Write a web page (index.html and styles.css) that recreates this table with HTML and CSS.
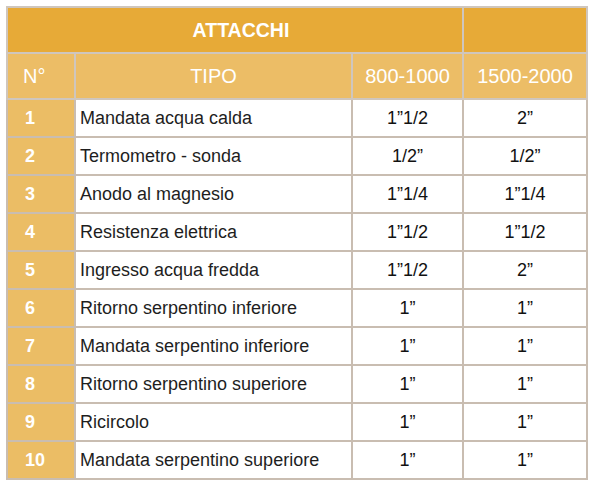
FILE: index.html
```html
<!DOCTYPE html>
<html lang="it">
<head>
<meta charset="utf-8">
<title>Attacchi</title>
<link rel="stylesheet" href="styles.css">
</head>
<body>
<table class="tbl">
  <colgroup>
    <col class="c-num"><col class="c-tipo"><col class="c-a"><col class="c-b">
  </colgroup>
  <thead>
    <tr class="title-row">
      <th colspan="3" class="title">ATTACCHI</th>
      <th class="title-empty"></th>
    </tr>
    <tr class="head-row">
      <th class="h-num">N°</th>
      <th>TIPO</th>
      <th>800-1000</th>
      <th>1500-2000</th>
    </tr>
  </thead>
  <tbody>
    <tr><td class="num">1</td><td class="tipo">Mandata acqua calda</td><td class="val">1”1/2</td><td class="val">2”</td></tr>
    <tr><td class="num">2</td><td class="tipo">Termometro - sonda</td><td class="val">1/2”</td><td class="val">1/2”</td></tr>
    <tr><td class="num">3</td><td class="tipo">Anodo al magnesio</td><td class="val">1”1/4</td><td class="val">1”1/4</td></tr>
    <tr><td class="num">4</td><td class="tipo">Resistenza elettrica</td><td class="val">1”1/2</td><td class="val">1”1/2</td></tr>
    <tr><td class="num">5</td><td class="tipo">Ingresso acqua fredda</td><td class="val">1”1/2</td><td class="val">2”</td></tr>
    <tr><td class="num">6</td><td class="tipo">Ritorno serpentino inferiore</td><td class="val">1”</td><td class="val">1”</td></tr>
    <tr><td class="num">7</td><td class="tipo">Mandata serpentino inferiore</td><td class="val">1”</td><td class="val">1”</td></tr>
    <tr><td class="num">8</td><td class="tipo">Ritorno serpentino superiore</td><td class="val">1”</td><td class="val">1”</td></tr>
    <tr><td class="num">9</td><td class="tipo">Ricircolo</td><td class="val">1”</td><td class="val">1”</td></tr>
    <tr><td class="num">10</td><td class="tipo">Mandata serpentino superiore</td><td class="val">1”</td><td class="val">1”</td></tr>
  </tbody>
</table>
</body>
</html>
```
FILE: styles.css
```css
html, body {
  margin: 0;
  padding: 0;
  background: #ffffff;
}
body {
  padding: 6px 0 0 6px;
  font-family: "Liberation Sans", Arial, Helvetica, sans-serif;
}
.tbl {
  border-collapse: collapse;
  table-layout: fixed;
  width: 580px;
}
.c-num { width: 68px; }
.c-tipo { width: 277px; }
.c-a { width: 111px; }
.c-b { width: 124px; }

.tbl th, .tbl td {
  border: 2px solid #c9bdb1;
  padding: 0;
}
.title-row th {
  background: #e7aa37;
  height: 44px;
  color: #ffffff;
  font-weight: bold;
  font-size: 19.5px;
  text-align: center;
  border-color: #cfc6bd;
}
.title-row th.title {
  padding-left: 12px;
}
.head-row th {
  background: #ecbd66;
  height: 44px;
  color: #ffffff;
  font-weight: normal;
  font-size: 20px;
  text-align: center;
  border-color: #cfc6bd;
}
.head-row th.h-num {
  text-align: left;
  padding-left: 15px;
}
.tbl td {
  height: 36px;
  font-size: 18px;
}
.num {
  background: #ebbd65;
  color: #ffffff;
  font-weight: bold;
  padding-left: 17px !important;
}
.tipo {
  color: #1e1e1e;
  padding-left: 4px !important;
}
.val {
  color: #111111;
  text-align: center;
}
```
